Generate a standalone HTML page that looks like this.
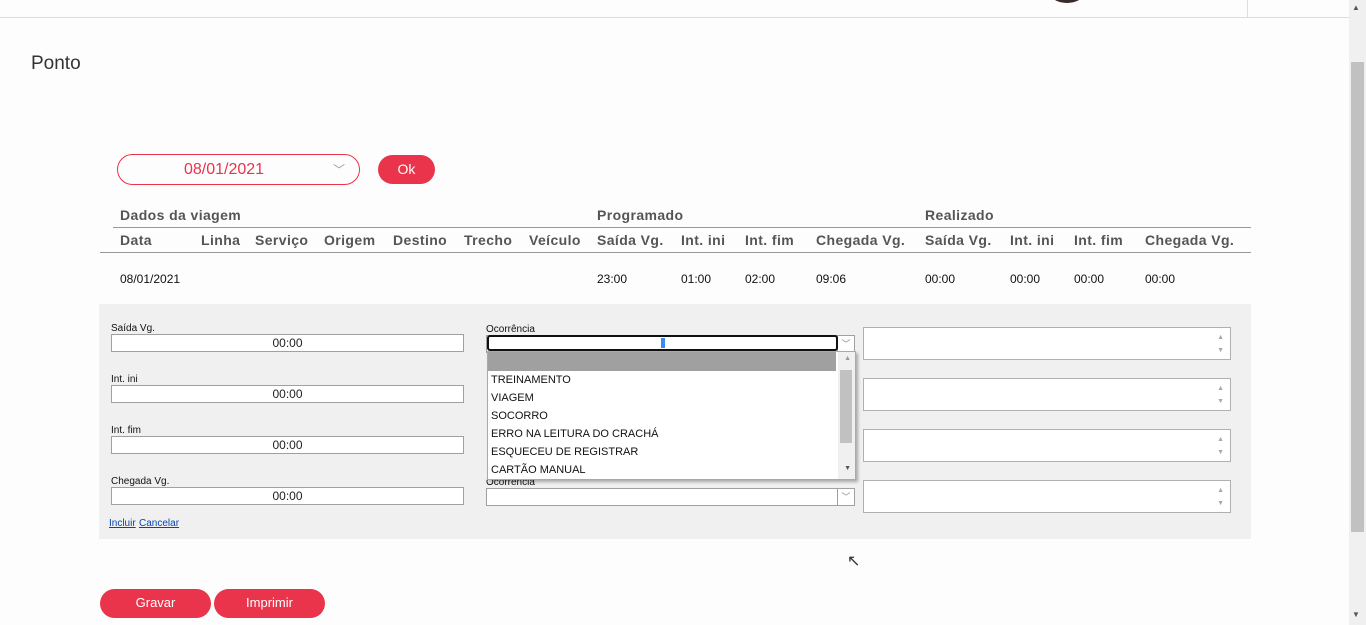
<!DOCTYPE html>
<html><head><meta charset="utf-8"><style>
*{box-sizing:border-box;margin:0;padding:0}
body{width:1366px;height:625px;overflow:hidden;background:#fdfdfd;font-family:"Liberation Sans",sans-serif;position:relative;color:#222}
.a{position:absolute}
.h{font-weight:bold;font-size:14px;color:#555;letter-spacing:0.4px}
.d{font-size:12px;color:#111}
.lab{font-size:10px;color:#111}
.inp{background:#fff;border:1px solid #a0a0a0;height:18px;font-size:12px;text-align:center;line-height:16px}
.ta{background:#fff;border:1px solid #b0b0b0;width:368px;height:33px}
.ta:after{content:"▲\A▼";white-space:pre;position:absolute;right:6px;top:3px;font-size:7px;line-height:13px;color:#aaa}
.btn{background:#e9344b;color:#fff;border-radius:15px;text-align:center;font-size:13px}
.sel{background:#fff;border:1px solid #a0a0a0;height:18px}
.arr{position:absolute;right:0;top:0;width:17px;height:16px;border-left:1px solid #a0a0a0;font-size:9px;color:#888;text-align:center;line-height:16px}
.opt{font-size:11px;height:18px;line-height:18px;padding-left:3px;color:#111}
</style></head><body>
<div class="a" style="left:0;top:0;width:1349px;height:18px;border-bottom:1px solid #ddd;background:#fdfdfd"></div>
<div class="a" style="left:1247px;top:0;width:1px;height:17px;background:#ddd"></div>
<div class="a" style="left:1052px;top:-12px;width:30px;height:15px;border-radius:50%;background:#3a2a2a"></div>
<div class="a" style="left:1349px;top:0;width:17px;height:625px;background:#f0f0f0"></div>
<div class="a" style="left:1351px;top:62px;width:13px;height:470px;background:#c1c1c1"></div>
<div class="a" style="left:1352px;top:3px;font-size:8px;color:#555">▲</div>
<div class="a" style="left:1352px;top:610px;font-size:8px;color:#555">▼</div>

<div class="a" style="left:31px;top:53px;font-size:19px;color:#333">Ponto</div>

<div class="a" style="left:117px;top:154px;width:243px;height:31px;border:1px solid #e9344b;border-radius:16px;color:#e9344b;font-size:16px;line-height:30px;padding-left:66px">08/01/2021<span style="position:absolute;right:14px;top:0;color:#999;font-size:12px">﹀</span></div>
<div class="a btn" style="left:378px;top:155px;width:57px;height:29px;line-height:28px;font-size:14px">Ok</div>

<div class="a h" style="left:120px;top:207px">Dados da viagem</div>
<div class="a h" style="left:597px;top:207px">Programado</div>
<div class="a h" style="left:925px;top:207px">Realizado</div>
<div class="a" style="left:113px;top:227px;width:1138px;height:1px;background:#999"></div>
<div class="a h" style="left:120px;top:232px">Data</div>
<div class="a h" style="left:201px;top:232px">Linha</div>
<div class="a h" style="left:255px;top:232px">Serviço</div>
<div class="a h" style="left:324px;top:232px">Origem</div>
<div class="a h" style="left:393px;top:232px">Destino</div>
<div class="a h" style="left:464px;top:232px">Trecho</div>
<div class="a h" style="left:529px;top:232px">Veículo</div>
<div class="a h" style="left:597px;top:232px">Saída Vg.</div>
<div class="a h" style="left:681px;top:232px">Int. ini</div>
<div class="a h" style="left:745px;top:232px">Int. fim</div>
<div class="a h" style="left:816px;top:232px">Chegada Vg.</div>
<div class="a h" style="left:925px;top:232px">Saída Vg.</div>
<div class="a h" style="left:1010px;top:232px">Int. ini</div>
<div class="a h" style="left:1074px;top:232px">Int. fim</div>
<div class="a h" style="left:1145px;top:232px">Chegada Vg.</div>
<div class="a" style="left:100px;top:252px;width:1151px;height:1px;background:#999"></div>
<div class="a d" style="left:120px;top:272px">08/01/2021</div>
<div class="a d" style="left:597px;top:272px">23:00</div>
<div class="a d" style="left:681px;top:272px">01:00</div>
<div class="a d" style="left:745px;top:272px">02:00</div>
<div class="a d" style="left:816px;top:272px">09:06</div>
<div class="a d" style="left:925px;top:272px">00:00</div>
<div class="a d" style="left:1010px;top:272px">00:00</div>
<div class="a d" style="left:1074px;top:272px">00:00</div>
<div class="a d" style="left:1145px;top:272px">00:00</div>

<div class="a" style="left:99px;top:304px;width:1152px;height:235px;background:#f0f0f0"></div>
<div class="a lab" style="left:111px;top:323px">Saída Vg.</div>
<div class="a inp" style="left:111px;top:334px;width:353px;line-height:17px">00:00</div>
<div class="a lab" style="left:111px;top:374px">Int. ini</div>
<div class="a inp" style="left:111px;top:385px;width:353px;line-height:17px">00:00</div>
<div class="a lab" style="left:111px;top:425px">Int. fim</div>
<div class="a inp" style="left:111px;top:436px;width:353px;line-height:17px">00:00</div>
<div class="a lab" style="left:111px;top:476px">Chegada Vg.</div>
<div class="a inp" style="left:111px;top:487px;width:353px;line-height:17px">00:00</div>
<div class="a" style="left:109px;top:518px;font-size:10px;color:#0645ad;text-decoration:underline">Incluir</div>
<div class="a" style="left:139px;top:518px;font-size:10px;color:#0645ad;text-decoration:underline">Cancelar</div>

<div class="a lab" style="left:486px;top:324px">Ocorrência</div>
<div class="a sel" style="left:486px;top:335px;width:369px"><div class="arr">﹀</div></div>
<div class="a" style="left:487px;top:335px;width:351px;height:16px;border:2px solid #111;border-radius:3px;background:#fff"></div>
<div class="a" style="left:661px;top:338px;width:4px;height:10px;background:#3b8cf0"></div>
<div class="a lab" style="left:486px;top:477px">Ocorrência</div>
<div class="a sel" style="left:486px;top:488px;width:369px"><div class="arr">﹀</div></div>

<div class="a" style="left:487px;top:351px;width:369px;height:129px;background:#fff;border:1px solid #aaa;box-shadow:2px 2px 3px rgba(0,0,0,.3)">
<div style="height:19px;background:#a0a0a0;width:348px"></div>
<div class="opt">TREINAMENTO</div><div class="opt">VIAGEM</div><div class="opt">SOCORRO</div><div class="opt">ERRO NA LEITURA DO CRACHÁ</div><div class="opt">ESQUECEU DE REGISTRAR</div><div class="opt">CARTÃO MANUAL</div>
<div class="a" style="right:0;top:0;width:17px;height:127px;background:#f0f0f0"></div>
<div class="a" style="right:3px;top:18px;width:12px;height:73px;background:#c1c1c1"></div>
<div class="a" style="right:4px;top:3px;font-size:7px;color:#999">▲</div>
<div class="a" style="right:4px;top:113px;font-size:7px;color:#555">▼</div>
</div>

<div class="a ta" style="left:863px;top:327px"></div>
<div class="a ta" style="left:863px;top:378px"></div>
<div class="a ta" style="left:863px;top:429px"></div>
<div class="a ta" style="left:863px;top:480px"></div>

<div class="a btn" style="left:100px;top:589px;width:111px;height:29px;line-height:28px">Gravar</div>
<div class="a btn" style="left:214px;top:589px;width:111px;height:29px;line-height:28px">Imprimir</div>
<div class="a" style="left:847px;top:551px;font-size:16px;color:#333">&#8598;</div>
</body></html>
